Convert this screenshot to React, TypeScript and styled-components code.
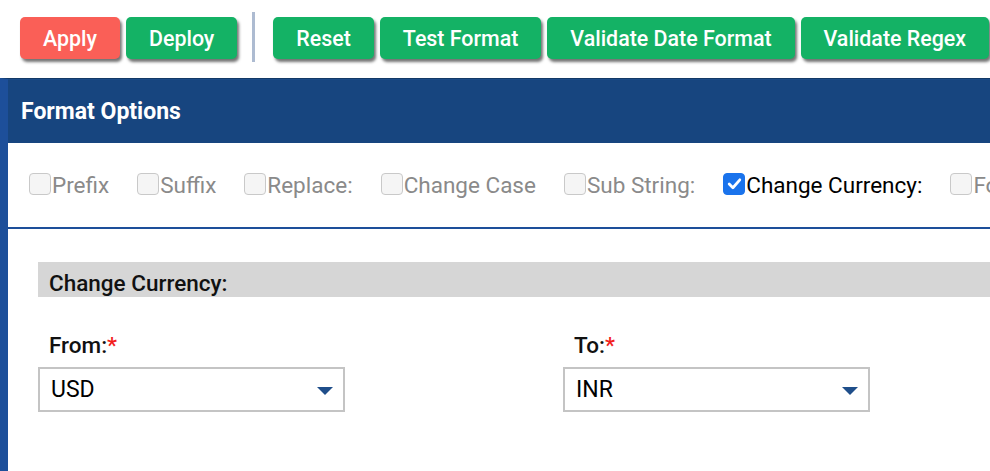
import React, { useState } from "react";
import styled, { createGlobalStyle } from "styled-components";

const GlobalStyle = createGlobalStyle`
  html, body {
    margin: 0;
    padding: 0;
    background: #ffffff;
    font-family: Roboto, "Liberation Sans", Arial, sans-serif;
    overflow: hidden;
  }
`;

const Page = styled.div`
  width: 990px;
  height: 471px;
  overflow: hidden;
  background: #ffffff;
  display: flex;
  flex-direction: column;
`;

const Toolbar = styled.div`
  height: 78px;
  flex-shrink: 0;
  display: flex;
  align-items: flex-start;
  padding: 17px 0 0 20px;
  box-sizing: border-box;
  gap: 6px;
`;

const Button = styled.button<{ $variant?: "red" | "green" }>`
  height: 42px;
  padding: 0 23px;
  border: none;
  border-radius: 5px;
  background: ${(p) => (p.$variant === "red" ? "#fa5f57" : "#14b265")};
  color: #ffffff;
  font-family: Roboto, "Liberation Sans", Arial, sans-serif;
  font-size: 21.4px;
  font-weight: 500;
  white-space: nowrap;
  box-shadow: 2px 3px 3px rgba(0, 0, 0, 0.55);
  cursor: pointer;
  flex-shrink: 0;
`;

const Separator = styled.div`
  width: 3px;
  height: 50px;
  margin: -5px 12px 0 9px;
  background: #adbbd1;
  flex-shrink: 0;
`;

const Panel = styled.div`
  flex: 1;
  border-top: 1px solid #143966;
  border-left: 8px solid #1d4f9a;
`;

const PanelHeader = styled.div`
  height: 63px;
  background: #17457f;
  border-top: 1px solid #1a4a88;
  display: flex;
  align-items: center;
  padding-left: 13px;
  color: #ffffff;
  font-size: 23px;
  font-weight: 700;
`;

const OptionRow = styled.div`
  height: 86px;
  display: flex;
  align-items: center;
  padding: 0 0 0 21px;
  white-space: nowrap;
  overflow: hidden;
  border-bottom: 2px solid #1d4f9a;
  box-sizing: border-box;
`;

const Option = styled.label<{ $checked?: boolean }>`
  display: flex;
  align-items: center;
  margin-right: 28px;
  font-size: 22.5px;
  color: ${(p) => (p.$checked ? "#000000" : "#8a8a8a")};
  flex-shrink: 0;
`;

const Box = styled.span<{ $checked?: boolean }>`
  width: 22px;
  height: 22px;
  margin-right: 1px;
  border-radius: 4px;
  box-sizing: border-box;
  border: 1px solid ${(p) => (p.$checked ? "#1a73ec" : "#c9c9c9")};
  background: ${(p) => (p.$checked ? "#1a73ec" : "#f5f5f5")};
  display: flex;
  align-items: center;
  justify-content: center;
  margin-top: -3px;
`;

const Content = styled.div`
  padding: 33px 0 0 30px;
`;

const SectionBar = styled.div`
  height: 35px;
  background: #d6d6d6;
  padding: 8px 0 0 11px;
  box-sizing: border-box;
  font-size: 22.5px;
  font-weight: 500;
  color: #111111;
  white-space: nowrap;
`;

const FieldGrid = styled.div`
  display: grid;
  grid-template-columns: 525px 525px;
  margin-top: 36px;
`;

const Field = styled.div`
  display: flex;
  flex-direction: column;
`;

const Label = styled.div`
  font-size: 22.5px;
  font-weight: 500;
  color: #111111;
  padding-left: 11px;
  height: 34px;
  line-height: 24px;
`;

const Required = styled.span`
  color: #f21d1d;
`;

const Select = styled.div`
  width: 307px;
  height: 45px;
  border: 2px solid #c4c4c4;
  box-sizing: border-box;
  display: flex;
  align-items: center;
  justify-content: space-between;
  padding: 0 10px 0 11px;
  font-size: 23px;
  color: #000000;
`;

const Caret = styled.span`
  width: 0;
  height: 0;
  border-left: 8px solid transparent;
  border-right: 8px solid transparent;
  border-top: 8px solid #1f4e8a;
  margin-top: 3px;
`;

const options = [
  "Prefix",
  "Suffix",
  "Replace:",
  "Change Case",
  "Sub String:",
  "Change Currency:",
  "Format Date:",
];

export default function App() {
  const [checked] = useState("Change Currency:");

  return (
    <Page>
      <GlobalStyle />
      <Toolbar>
        <Button $variant="red">Apply</Button>
        <Button>Deploy</Button>
        <Separator />
        <Button>Reset</Button>
        <Button>Test Format</Button>
        <Button>Validate Date Format</Button>
        <Button>Validate Regex</Button>
      </Toolbar>
      <Panel>
        <PanelHeader>Format Options</PanelHeader>
        <OptionRow>
          {options.map((o) => (
            <Option key={o} $checked={o === checked}>
              <Box $checked={o === checked}>
                {o === checked && (
                  <svg width="17" height="17" viewBox="0 0 16 16">
                    <path
                      d="M3 8.5 L6.5 12 L13 4.5"
                      fill="none"
                      stroke="#ffffff"
                      strokeWidth="2.6"
                      strokeLinecap="round"
                      strokeLinejoin="round"
                    />
                  </svg>
                )}
              </Box>
              {o}
            </Option>
          ))}
        </OptionRow>
        <Content>
          <SectionBar>Change Currency:</SectionBar>
          <FieldGrid>
            <Field>
              <Label>
                From:<Required>*</Required>
              </Label>
              <Select>
                USD
                <Caret />
              </Select>
            </Field>
            <Field>
              <Label>
                To:<Required>*</Required>
              </Label>
              <Select>
                INR
                <Caret />
              </Select>
            </Field>
          </FieldGrid>
        </Content>
      </Panel>
    </Page>
  );
}
